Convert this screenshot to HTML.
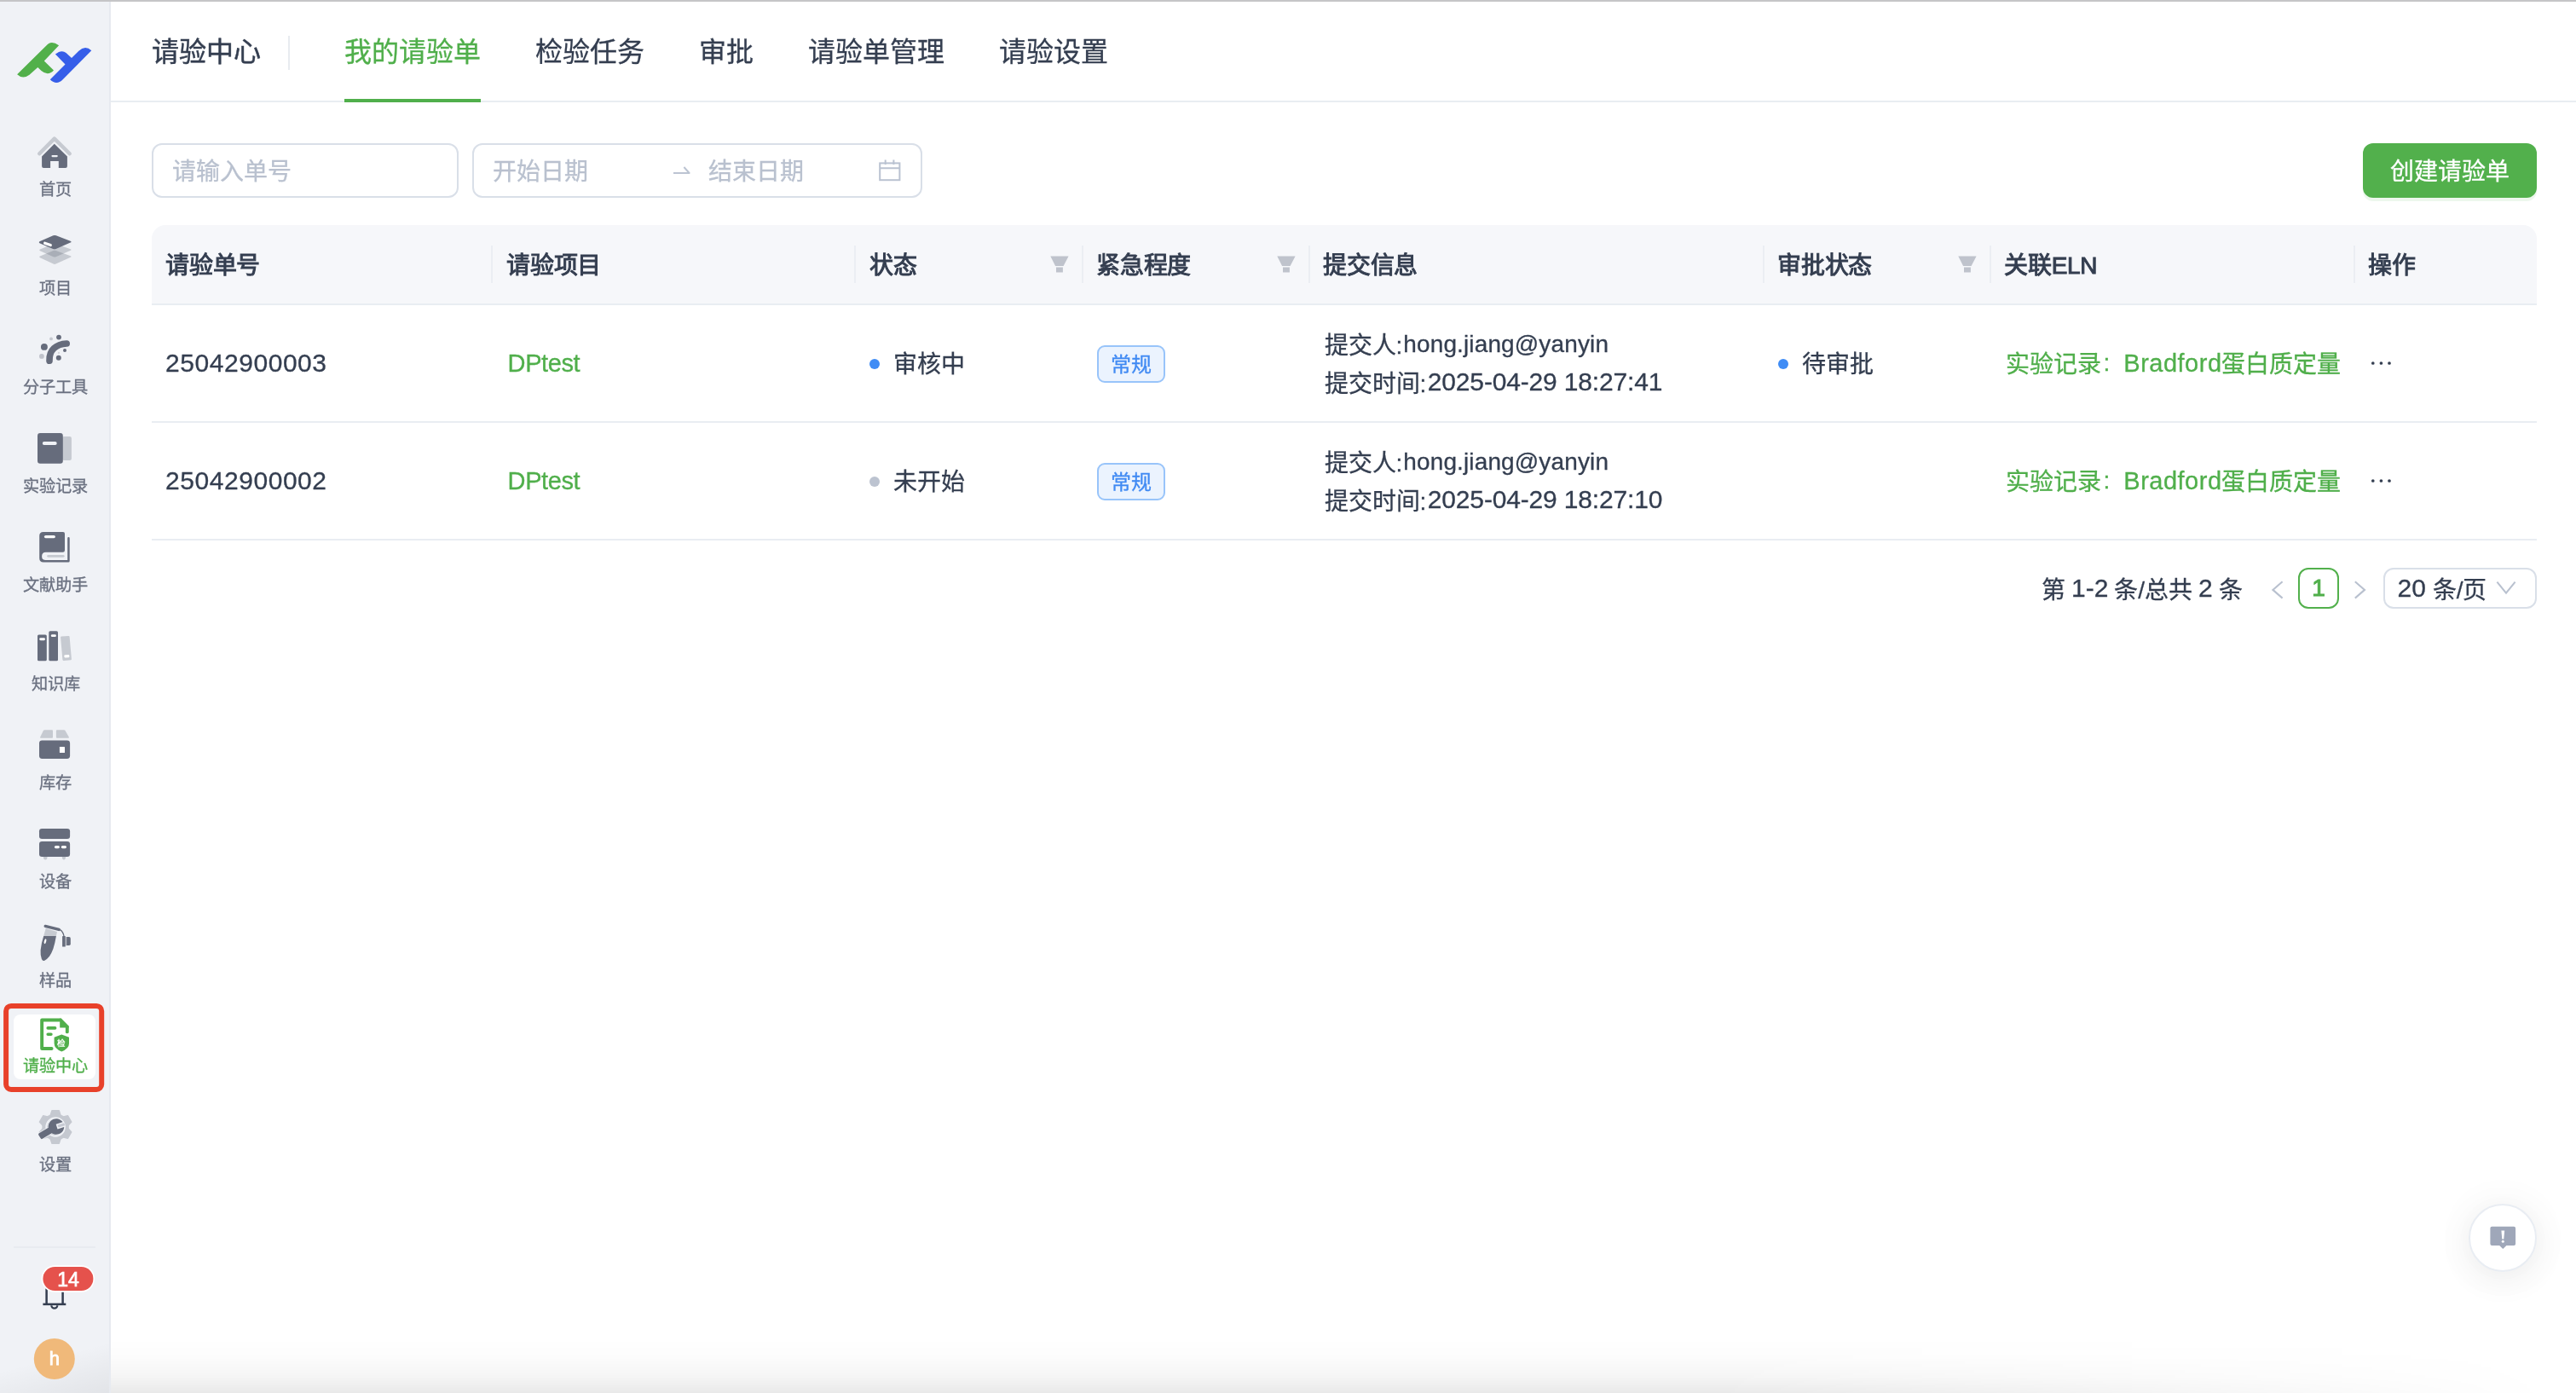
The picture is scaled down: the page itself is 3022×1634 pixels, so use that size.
<!DOCTYPE html>
<html lang="zh-CN">
<head>
<meta charset="utf-8">
<title>请验中心</title>
<style>
*{box-sizing:border-box;margin:0;padding:0}
html,body{width:3022px;height:1634px;overflow:hidden;background:#fff}
body{-webkit-text-stroke:.3px;will-change:transform;position:relative;font-family:"Liberation Sans",sans-serif;color:#343e50;-webkit-font-smoothing:antialiased}
.abs{position:absolute}
.t{position:absolute;white-space:nowrap;line-height:48px;height:44px;font-size:28px}
/* sidebar */
#side{left:0;top:2px;width:130px;height:1632px;background:linear-gradient(165deg,rgba(0,0,0,0) 96.4%,rgba(0,0,0,.06) 100%),#f0f2f6;border-right:2px solid #e7eaf0}
.lbl{position:absolute;left:0;width:130px;text-align:center;font-size:19.2px;line-height:30.6px;height:28px;color:#6b7181;white-space:nowrap}
/* header */
.tab{position:absolute;top:38px;height:44px;line-height:47.2px;font-size:32px;white-space:nowrap;color:#343e50}
/* table */
.th{position:absolute;top:288px;height:44px;line-height:48.6px;font-size:28px;font-weight:normal;-webkit-text-stroke:1px;letter-spacing:-.3px;white-space:nowrap;color:#343e50}
.sep{position:absolute;top:288px;width:2px;height:44px;background:#ebeef3}
.g{color:#50af4b}
.num{font-size:30px;letter-spacing:.55px;line-height:44px}
.dp{font-size:29px;letter-spacing:-.4px;line-height:44px}
.em{font-size:28px;letter-spacing:.13px;margin-left:1px;position:relative;top:-2px}
.dt{font-size:30px;letter-spacing:-.16px;margin-left:1.5px;position:relative;top:-2px}
.br{font-size:29px;letter-spacing:.5px;line-height:44px}
.dg{font-size:30px;position:relative;top:-2px}
.dot{position:absolute;width:12px;height:12px;border-radius:50%}
.tag{position:absolute;left:1287px;width:80px;height:44px;border:2px solid #98c4fa;background:#ebf3fe;border-radius:9px;color:#408af3;font-size:24px;line-height:42.6px;text-align:center;white-space:nowrap}
</style>
</head>
<body>
<!-- top bar -->
<div class="abs" style="left:0;top:0;width:3022px;height:2px;background:#c5c5c7"></div>

<!-- SIDEBAR -->
<div id="side" class="abs"></div>
<!--ICONS-START-->
<svg class="abs" style="left:0;top:0" width="130" height="1634" viewBox="0 0 130 1634">
<!-- logo -->
<path d="M20.1,87.3 L54.1,53.7 Q59.7,46.4 69.1,53.2 L51.8,71.4 L63,82.6 Q56.2,89.8 48.5,83.1 L44.3,78.9 L34.5,87.7 Q26.8,93.6 20.1,87.3 Z" fill="#52b04a"/>
<path d="M58.8,93.3 Q66.3,100.8 73.7,93.3 L107.3,59.3 Q99.9,52.5 92.4,59.7 L84,68.1 L77.5,62.1 Q72.5,57.6 64.9,63.5 L76.5,75.6 Z" fill="#365ee9"/>
<!-- home -->
<path d="M46.2,180.3 L63.8,162.6 L81.7,180.3" fill="none" stroke="#666c7c" stroke-opacity=".3" stroke-width="4.4" stroke-linecap="round" stroke-linejoin="round"/>
<path d="M63.8,168.7 L78.9,183.4 L78.9,195 Q78.9,197 76.9,197 L68.8,197 L68.8,189.1 L59.1,189.1 L59.1,197 L51.1,197 Q49.1,197 49.1,195 L49.1,183.4 Z" fill="#666c7c"/>
<rect x="60.4" y="181.9" width="7.4" height="2.3" rx="1.1" fill="#f0f2f6"/>
<!-- project -->
<g fill="#666c7c" fill-opacity=".3" stroke="#666c7c" stroke-opacity=".3" stroke-width="0" stroke-linejoin="round">
<path d="M46.6,301.3 Q45.4,301.3 47,300.5 L62.6,294 Q64.1,293.3 65.6,294 L82.8,300.3 Q84.6,301 82.8,301.7 L65.6,309.6 Q64.1,310.3 62.6,309.6 L47,302.2 Q45.4,301.3 46.6,301.3 Z"/>
<path d="M46.6,293.3 Q45.4,293.3 47,292.5 L62.6,286 Q64.1,285.3 65.6,286 L82.8,292.3 Q84.6,293 82.8,293.7 L65.6,301.2 Q64.1,301.9 62.6,301.2 L47,294.2 Q45.4,293.3 46.6,293.3 Z"/>
</g>
<path d="M46.9,283 L62.4,276.3 Q64.1,275.6 65.8,276.3 L82.6,282.7 Q84.6,283.6 82.6,284.6 L65.6,292 Q63.9,292.7 62.2,292 L47,285.6 Q44.6,284.2 46.9,283 Z" fill="#666c7c"/>
<path d="M52.6,285.2 L59.3,287.6" stroke="#fff" stroke-width="3.2" stroke-linecap="round"/>
<!-- molecule -->
<path d="M58,423.2 C57.4,410.5 66,403.6 78.2,403" fill="none" stroke="#666c7c" stroke-width="7.6" stroke-linecap="round"/>
<circle cx="51.9" cy="406.9" r="3.95" fill="#666c7c"/>
<circle cx="69" cy="395.6" r="2.9" fill="#666c7c"/>
<circle cx="76" cy="411" r="2" fill="#666c7c"/>
<circle cx="68.8" cy="419.8" r="3" fill="#666c7c"/>
<circle cx="60" cy="397.4" r="1.95" fill="#666c7c" fill-opacity=".3"/>
<circle cx="48.9" cy="417.9" r="2.9" fill="#666c7c" fill-opacity=".35"/>
<circle cx="69" cy="413.9" r=".9" fill="#666c7c" fill-opacity=".3"/>
<!-- notebook -->
<rect x="73" y="511.9" width="10.9" height="28" rx="2" fill="#666c7c" fill-opacity=".3"/>
<rect x="44" y="507.9" width="29.8" height="35.9" rx="3" fill="#666c7c"/>
<rect x="49.8" y="518" width="16.9" height="3.9" rx="1.95" fill="#f0f2f6"/>
<!-- book -->
<path d="M46.2,628.6 Q46.2,624 50.8,624 L74,624 Q76,624 76,626 L76,645.5 Q76,647.7 73.8,647.7 L53.8,647.7 Q49.1,647.7 49.1,652.4 Q49.1,657 53.8,657 L79.2,657 L79.2,631.4 Q79.2,630.1 80.45,630.1 Q81.7,630.1 81.7,631.4 L81.7,658 Q81.7,659.5 80.2,659.5 L51,659.5 Q46.2,659.5 46.2,654.7 Z" fill="#666c7c"/>
<rect x="51.9" y="627.9" width="13" height="3.3" rx="1.65" fill="#fff"/>
<rect x="55.2" y="650.9" width="20.4" height="2.9" rx="1.45" fill="#666c7c" fill-opacity=".3"/>
<!-- knowledge -->
<rect x="44" y="744.4" width="10.8" height="30.9" rx="1.6" fill="#666c7c"/>
<rect x="46.2" y="748.3" width="6.8" height="2.9" rx="1.45" fill="#fff"/>
<rect x="57.3" y="740.2" width="10.7" height="35.1" rx="1.6" fill="#666c7c"/>
<rect x="59.8" y="744.2" width="6.1" height="2.9" rx="1.45" fill="#fff"/>
<path d="M72.2,746.4 L80.3,745.9 Q81.5,745.8 81.6,747 L83.9,773 Q84,774.2 82.8,774.3 L74.7,774.9 Q73.5,775 73.4,773.8 L71.1,747.7 Q71,746.5 72.2,746.4 Z" fill="#666c7c" fill-opacity=".3"/>
<rect x="75.3" y="768.1" width="6.1" height="3.2" rx="1.2" fill="#fff" transform="rotate(-4 78.3 769.7)"/>
<!-- inventory -->
<rect x="46" y="868.4" width="36.1" height="21.5" rx="3.4" fill="#666c7c"/>
<rect x="69.9" y="875.9" width="6.1" height="7.2" rx=".6" fill="#fff"/>
<path d="M52.2,856.2 L61,856.2 Q62,856.2 62,857.2 L62,864.7 Q62,865.7 61,865.7 L48,865.7 Q46.6,865.7 47.2,864.4 L50.9,857 Q51.3,856.2 52.2,856.2 Z" fill="#666c7c" fill-opacity=".3"/>
<path d="M66.9,856.2 L75.2,856.2 Q76.1,856.2 76.5,857 L80.8,864.4 Q81.5,865.7 80,865.7 L66.9,865.7 Q65.9,865.7 65.9,864.7 L65.9,857.2 Q65.9,856.2 66.9,856.2 Z" fill="#666c7c" fill-opacity=".3"/>
<!-- equipment -->
<path d="M50.9,1005 A2.3,3.5 0 0 0 55.5,1005 Z M72.8,1005 A2.15,3.5 0 0 0 77.1,1005 Z" fill="#666c7c" fill-opacity=".3"/>
<rect x="46" y="972" width="36.1" height="11.9" rx="3.2" fill="#666c7c"/>
<rect x="46" y="986.9" width="36.1" height="18.1" rx="3.2" fill="#666c7c"/>
<rect x="63.9" y="992" width="6" height="3.2" rx="1.6" fill="#fff"/>
<rect x="71.8" y="992" width="6.2" height="3.2" rx="1.6" fill="#fff"/>
<!-- sample -->
<path d="M53.7,1089 L67,1093 L65.9,1098 L51.2,1098 Z" fill="#666c7c" fill-opacity=".3"/>
<path d="M51.2,1098 L65.9,1098 Q64.6,1106 62.4,1113.1 Q60.6,1118 58,1121.7 Q55,1125.5 52.3,1126.7 Q50,1127.6 48.9,1125 Q47.2,1121 47.6,1114.5 Q48.5,1106 51.2,1098 Z" fill="#666c7c"/>
<ellipse cx="53" cy="1104.2" rx="1.2" ry="3" fill="#fff" transform="rotate(15 53 1104.2)"/>
<path d="M53.2,1086.4 L69.2,1090.4" stroke="#666c7c" stroke-width="3.4" stroke-linecap="round"/>
<path d="M70.2,1090.4 Q74.2,1093 75,1098" fill="none" stroke="#666c7c" stroke-width="1.3"/>
<rect x="73.1" y="1098" width="3.6" height="12.6" rx=".4" fill="#666c7c"/>
<rect x="76.7" y="1099" width="1.4" height="10.3" fill="#666c7c" fill-opacity=".4"/>
<path d="M78.1,1099.1 L81,1099.1 Q82.8,1099.1 82.8,1100.9 L82.8,1107.3 Q82.8,1109.1 81,1109.1 L78.1,1109.1 Z" fill="#666c7c"/>
<!-- active: red box + white pill -->
<rect x="7.1" y="1179.9" width="112.1" height="98.1" rx="6" fill="none" stroke="#e8412a" stroke-width="6"/>
<rect x="16" y="1190" width="96" height="76" rx="8" fill="#fff"/>
<path d="M60.6,1230 H49.15 V1196.5 H70.5" fill="none" stroke="#50af4b" stroke-width="3.9" stroke-linecap="round" stroke-linejoin="round"/>
<path d="M70.2,1194.6 L71.8,1194.6 L80.7,1203.5 L80.7,1205.6 L70.2,1205.6 Z" fill="#50af4b"/>
<path d="M78.8,1205 V1210.4" stroke="#50af4b" stroke-width="3.9" stroke-linecap="round"/>
<path d="M56.2,1205.9 H64.6 M56.2,1213.2 H59.9" stroke="#50af4b" stroke-width="3.6" stroke-linecap="round"/>
<path d="M72.3,1213.6 L81,1216.8 L81,1224 Q81,1230 72.3,1233.5 Q63.6,1230 63.6,1224 L63.6,1216.8 Z" fill="#50af4b" stroke="#fff" stroke-width="1.6" paint-order="stroke"/>
<text x="72.3" y="1227.2" font-size="9.5" font-weight="bold" fill="#fff" text-anchor="middle" font-family="Liberation Sans, sans-serif">检</text>
<!-- settings -->
<g fill="#666c7c" opacity=".3">
<circle cx="65.1" cy="1322" r="15.8"/>
<polygon points="71.3,1309.0 69.3,1302.8 60.9,1302.8 58.9,1309.0" stroke="#666c7c" stroke-width="1.4" stroke-linejoin="round"/>
<polygon points="79.5,1320.9 83.8,1316.0 79.6,1308.8 73.3,1310.1" stroke="#666c7c" stroke-width="1.4" stroke-linejoin="round"/>
<polygon points="73.3,1333.9 79.6,1335.2 83.8,1328.0 79.5,1323.1" stroke="#666c7c" stroke-width="1.4" stroke-linejoin="round"/>
<polygon points="58.9,1335.0 60.9,1341.2 69.3,1341.2 71.3,1335.0" stroke="#666c7c" stroke-width="1.4" stroke-linejoin="round"/>
<polygon points="50.7,1323.1 46.4,1328.0 50.6,1335.2 56.9,1333.9" stroke="#666c7c" stroke-width="1.4" stroke-linejoin="round"/>
<polygon points="56.9,1310.1 50.6,1308.8 46.4,1316.0 50.7,1320.9" stroke="#666c7c" stroke-width="1.4" stroke-linejoin="round"/>
</g>
<circle cx="65.1" cy="1322" r="10.9" fill="none" stroke="#f0f2f6" stroke-width="1.7"/>
<g transform="rotate(-31.5 65.1 1322)">
<path d="M44.8,1318.2 L57.6,1318.2 A9.3,9.3 0 1 1 57.6,1325.8 L44.8,1325.8 Q43.3,1325.8 43.3,1324.3 L43.3,1319.7 Q43.3,1318.2 44.8,1318.2 Z" fill="#666c7c" stroke="#f0f2f6" stroke-width="1.6" paint-order="stroke"/>
<path d="M76.2,1319.7 H67.4 V1324.3 H76.2" fill="#c7cad3" stroke="#f0f2f6" stroke-width="1.5" transform="rotate(14 65.1 1322)"/>
</g>
<!-- bottom divider -->
<rect x="16" y="1462" width="96" height="2" fill="#e8ebf0"/>
<!-- bell -->
<g fill="none" stroke="#343e50" stroke-width="2.5">
<path d="M54.6,1529.9 V1506 A9.5,9.5 0 0 1 73.6,1506 V1529.9"/>
<path d="M50.4,1529.9 H77.3"/>
<path d="M60.3,1531.2 A3.5,3.5 0 0 0 67.3,1531.2" stroke-width="2.2"/>
</g>
<rect x="48.6" y="1484.2" width="62.4" height="31.6" rx="15.8" fill="#fff"/>
<rect x="50.4" y="1486" width="59" height="28" rx="14" fill="#e5524c"/>
<text x="80" y="1508.6" font-size="23" fill="#fff" stroke="#fff" stroke-width=".7" text-anchor="middle" font-family="Liberation Sans, sans-serif">14</text>
<!-- avatar -->
<circle cx="63.8" cy="1594" r="24" fill="#f0b97a"/>
<text x="63.9" y="1601.2" font-size="22" fill="#fff" stroke="#fff" stroke-width=".8" text-anchor="middle" font-family="Liberation Sans, sans-serif">h</text>
</svg>
<!--ICONS-END-->
<!--LABELS-START-->
<div class="lbl" style="top:207.8px">首页</div>
<div class="lbl" style="top:323.9px">项目</div>
<div class="lbl" style="top:440.0px">分子工具</div>
<div class="lbl" style="top:555.5px">实验记录</div>
<div class="lbl" style="top:671.9px">文献助手</div>
<div class="lbl" style="top:787.5px">知识库</div>
<div class="lbl" style="top:903.6px">库存</div>
<div class="lbl" style="top:1019.6px">设备</div>
<div class="lbl" style="top:1135.9px">样品</div>
<div class="lbl g" style="top:1235.9px">请验中心</div>
<div class="lbl" style="top:1351.8px">设置</div>
<!--LABELS-END-->

<!-- HEADER -->
<div class="tab" style="left:178px;-webkit-text-stroke:.5px #343e50">请验中心</div>
<div class="abs" style="left:338px;top:42px;width:2px;height:40px;background:#e8ebf0"></div>
<div class="tab g" style="left:404px">我的请验单</div>
<div class="tab" style="left:628px">检验任务</div>
<div class="tab" style="left:820px">审批</div>
<div class="tab" style="left:948px">请验单管理</div>
<div class="tab" style="left:1172px">请验设置</div>
<div class="abs" style="left:130px;top:118px;width:2892px;height:2px;background:#e9edf2"></div>
<div class="abs" style="left:404px;top:116px;width:160px;height:4px;background:#50af4b"></div>

<!--FILTERS-START-->
<div class="abs" style="left:178px;top:168px;width:360px;height:64px;border:2px solid #d9dfe8;border-radius:12px"></div>
<div class="t" style="left:202px;top:178px;color:#b9c1cf">请输入单号</div>
<div class="abs" style="left:554px;top:168px;width:528px;height:64px;border:2px solid #d9dfe8;border-radius:12px"></div>
<div class="t" style="left:578px;top:178px;color:#b9c1cf">开始日期</div>
<div class="t" style="left:831px;top:178px;color:#b9c1cf">结束日期</div>
<svg class="abs" style="left:780px;top:180px" width="40" height="40" viewBox="780 180 40 40"><path d="M790,203 H808.6 L802.4,196" fill="none" stroke="#bcc4d2" stroke-width="2" stroke-linejoin="round"/></svg>
<svg class="abs" style="left:1024px;top:180px" width="40" height="40" viewBox="1024 180 40 40"><g fill="none" stroke="#bac2d1" stroke-width="2"><rect x="1032.2" y="191.4" width="23.2" height="19.8"/><path d="M1032.2,197.2 H1055.4 M1038.7,187.6 V193 M1048.4,187.6 V193"/></g></svg>
<div class="abs" style="left:2772px;top:168px;width:204px;height:64px;border-radius:12px;background:#52b04c;box-shadow:0 4px 0 rgba(82,176,76,.1)"></div>
<div class="t" style="left:2772px;top:178px;width:204px;text-align:center;color:#fff">创建请验单</div>
<!--FILTERS-END-->
<!--TABLE-START-->
<div class="abs" style="left:178px;top:264px;width:2798px;height:92px;background:#f6f7fa;border-radius:16px 16px 0 0"></div>
<div class="abs" style="left:178px;top:356px;width:2798px;height:2px;background:#e9edf2"></div>
<div class="th" style="left:194.3px">请验单号</div>
<div class="sep" style="left:576px"></div>
<div class="th" style="left:594.3px">请验项目</div>
<div class="sep" style="left:1002px"></div>
<div class="th" style="left:1020.3px">状态</div>
<div class="sep" style="left:1269px"></div>
<div class="th" style="left:1286.3px">紧急程度</div>
<div class="sep" style="left:1535px"></div>
<div class="th" style="left:1552.3px">提交信息</div>
<div class="sep" style="left:2068px"></div>
<div class="th" style="left:2085.3px">审批状态</div>
<div class="sep" style="left:2334px"></div>
<div class="th" style="left:2351.3px">关联ELN</div>
<div class="sep" style="left:2761px"></div>
<div class="th" style="left:2778.3px">操作</div>
<svg class="abs" style="left:1232px;top:298px" width="24" height="24" viewBox="0 0 24 24"><path d="M0.3,2.5 H21.6 L15.6,13.9 H6.1 Z M7,15.6 H14.9 V21.6 H7 Z" fill="#bfc3cc"/></svg>
<svg class="abs" style="left:1498px;top:298px" width="24" height="24" viewBox="0 0 24 24"><path d="M0.3,2.5 H21.6 L15.6,13.9 H6.1 Z M7,15.6 H14.9 V21.6 H7 Z" fill="#bfc3cc"/></svg>
<svg class="abs" style="left:2297px;top:298px" width="24" height="24" viewBox="0 0 24 24"><path d="M0.3,2.5 H21.6 L15.6,13.9 H6.1 Z M7,15.6 H14.9 V21.6 H7 Z" fill="#bfc3cc"/></svg>
<div class="abs" style="left:178px;top:494px;width:2798px;height:2px;background:#e9edf2"></div>
<div class="t num" style="left:194px;top:404px">25042900003</div>
<div class="t g dp" style="left:595.6px;top:404px">DPtest</div>
<div class="dot" style="left:1020px;top:421px;background:#3f8cf5"></div>
<div class="t" style="left:1047.8px;top:404px">审核中</div>
<div class="tag" style="top:405px">常规</div>
<div class="t" style="left:1553.5px;top:382px">提交人:<span class="em">hong.jiang@yanyin</span></div>
<div class="t" style="left:1553.5px;top:426px">提交时间:<span class="dt">2025-04-29 18:27:41</span></div>
<div class="dot" style="left:2086px;top:421px;background:#3f8cf5"></div>
<div class="t" style="left:2113.9px;top:404px">待审批</div>
<div class="t g" style="left:2353px;top:404px">实验记录</div>
<div class="t g" style="left:2467.5px;top:404px;line-height:44px">:</div>
<div class="t g br" style="left:2491.3px;top:404px">Bradford</div>
<div class="t g" style="left:2606.3px;top:404px">蛋白质定量</div>
<svg class="abs" style="left:2780px;top:420px" width="28" height="12" viewBox="0 0 28 12"><g fill="#343e50"><circle cx="3.8" cy="6" r="1.85"/><circle cx="13.4" cy="6" r="1.85"/><circle cx="23" cy="6" r="1.85"/></g></svg>
<div class="abs" style="left:178px;top:632px;width:2798px;height:2px;background:#e9edf2"></div>
<div class="t num" style="left:194px;top:542px">25042900002</div>
<div class="t g dp" style="left:595.6px;top:542px">DPtest</div>
<div class="dot" style="left:1020px;top:559px;background:#bcc3d0"></div>
<div class="t" style="left:1047.8px;top:542px">未开始</div>
<div class="tag" style="top:543px">常规</div>
<div class="t" style="left:1553.5px;top:520px">提交人:<span class="em">hong.jiang@yanyin</span></div>
<div class="t" style="left:1553.5px;top:564px">提交时间:<span class="dt">2025-04-29 18:27:10</span></div>
<div class="t g" style="left:2353px;top:542px">实验记录</div>
<div class="t g" style="left:2467.5px;top:542px;line-height:44px">:</div>
<div class="t g br" style="left:2491.3px;top:542px">Bradford</div>
<div class="t g" style="left:2606.3px;top:542px">蛋白质定量</div>
<svg class="abs" style="left:2780px;top:558px" width="28" height="12" viewBox="0 0 28 12"><g fill="#343e50"><circle cx="3.8" cy="6" r="1.85"/><circle cx="13.4" cy="6" r="1.85"/><circle cx="23" cy="6" r="1.85"/></g></svg>
<!--TABLE-END-->
<!--PAGER-START-->
<div class="t" style="left:2395px;top:668px;word-spacing:-.8px">第 <span class="dg">1-2</span> 条/总共 <span class="dg">2</span> 条</div>
<svg class="abs" style="left:2660px;top:676px" width="24" height="30" viewBox="2660 676 24 30"><path d="M2677.6,682.2 L2666.4,691.9 L2677.6,701.6" fill="none" stroke="#b9c1cf" stroke-width="2.1"/></svg>
<div class="abs" style="left:2696px;top:666px;width:48px;height:48px;border:2px solid #52b04c;border-radius:12px"></div>
<div class="t g" style="left:2696px;top:668px;width:48px;text-align:center;font-size:28px;line-height:44px;-webkit-text-stroke:1px">1</div>
<svg class="abs" style="left:2756px;top:676px" width="24" height="30" viewBox="2756 676 24 30"><path d="M2762.8,682.2 L2774,691.9 L2762.8,701.6" fill="none" stroke="#b9c1cf" stroke-width="2.1"/></svg>
<div class="abs" style="left:2796px;top:666px;width:180px;height:48px;border:2px solid #d9dfe8;border-radius:12px"></div>
<div class="t" style="left:2812.5px;top:668px"><span class="dg">20</span> 条/页</div>
<svg class="abs" style="left:2924px;top:676px" width="32" height="28" viewBox="2924 676 32 28"><path d="M2929.4,682.6 L2940,695.6 L2950.6,682.6" fill="none" stroke="#b9c1cf" stroke-width="2.1"/></svg>
<!--PAGER-END-->
<!--FLOAT-START-->
<div class="abs" style="left:130px;top:1570px;width:2892px;height:64px;background:linear-gradient(to bottom,rgba(0,0,0,0),rgba(0,0,0,.012) 35%,rgba(0,0,0,.04) 70%,rgba(0,0,0,.085));-webkit-mask-image:linear-gradient(to right,#000 65%,transparent 99%);mask-image:linear-gradient(to right,#000 65%,transparent 99%)"></div>
<div class="abs" style="left:2896px;top:1412px;width:80px;height:80px;border-radius:50%;background:#fff;border:2px solid #e9edf3;box-shadow:0 8px 40px rgba(0,0,0,.07),0 0 70px rgba(0,0,0,.03)"></div>
<svg class="abs" style="left:2916px;top:1432px" width="40" height="40" viewBox="2916 1432 40 40"><path d="M2923.4,1438.7 H2949.1 Q2951.1,1438.7 2951.1,1440.7 V1459.1 Q2951.1,1461.1 2949.1,1461.1 H2940.4 L2936.3,1465 L2932.2,1461.1 H2923.4 Q2921.4,1461.1 2921.4,1459.1 V1440.7 Q2921.4,1438.7 2923.4,1438.7 Z" fill="#9fa7b9"/><path d="M2934.4,1443.4 H2938.2 L2937.3,1453.6 H2935.3 Z" fill="#fff"/><circle cx="2936.3" cy="1456.3" r="1.5" fill="#fff"/></svg>
<!--FLOAT-END-->
</body>
</html>
